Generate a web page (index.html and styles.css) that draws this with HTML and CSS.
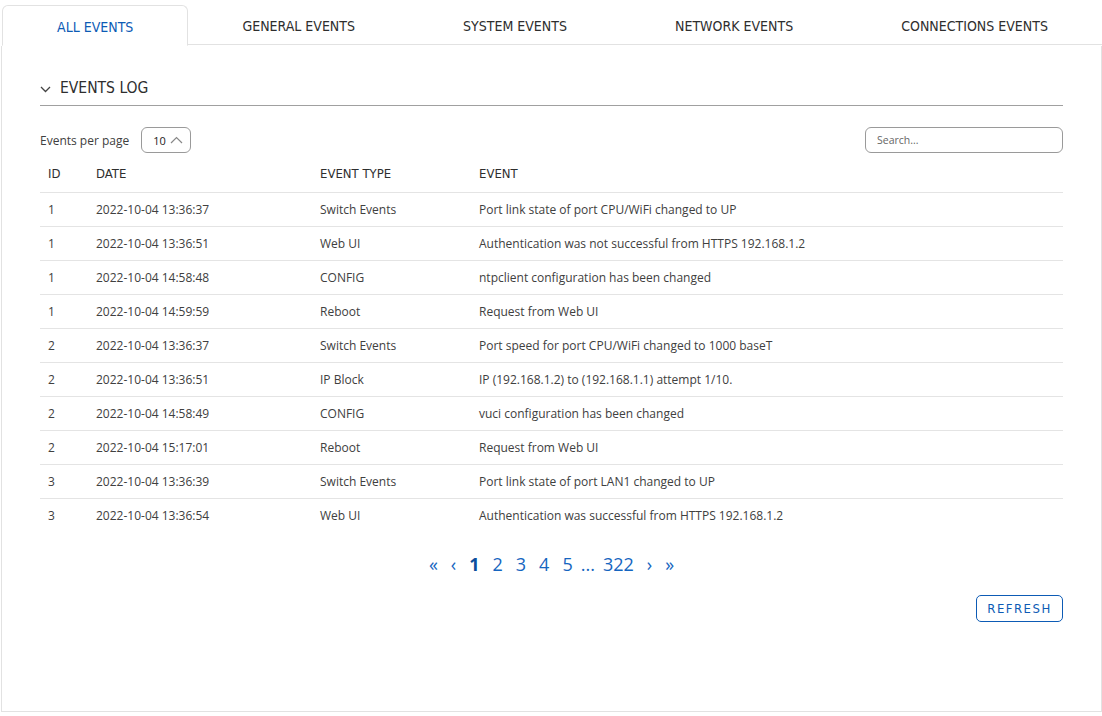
FILE: index.html
```html
<!DOCTYPE html>
<html lang="en">
<head>
  <meta charset="UTF-8" />
  <meta name="viewport" content="width=device-width, initial-scale=1.0"/>
  <title>Events Log</title>
  <link rel="stylesheet" href="styles.css">
</head>
<body>
  <div class="page">
    <ul class="tabs">
      <li class="tab active">All events</li>
      <li class="tab">General events</li>
      <li class="tab">System events</li>
      <li class="tab">Network events</li>
      <li class="tab">Connections events</li>
    </ul>
    <div class="panel">
      <div class="section-title">
        <svg class="chevron" width="11" height="7" viewBox="0 0 11 7"><path d="M1 1l4.5 4.5L10 1" fill="none" stroke="#444" stroke-width="1.3"/></svg>
        <span>Events log</span>
      </div>

      <div class="toolbar">
        <div class="per-page">
          <span>Events per page</span>
          <div class="select">10
            <svg width="13" height="8" viewBox="0 0 13 8"><path d="M1 7l5.5-5.5L12 7" fill="none" stroke="#888" stroke-width="1.2"/></svg>
          </div>
        </div>
        <input class="search" type="text" placeholder="Search...">
      </div>

      <table class="events">
        <thead>
          <tr><th class="c-id">ID</th><th class="c-date">Date</th><th class="c-type">Event type</th><th>Event</th></tr>
        </thead>
        <tbody>
          <tr><td>1</td><td>2022-10-04 13:36:37</td><td>Switch Events</td><td>Port link state of port CPU/WiFi changed to UP</td></tr>
          <tr><td>1</td><td>2022-10-04 13:36:51</td><td>Web UI</td><td>Authentication was not successful from HTTPS 192.168.1.2</td></tr>
          <tr><td>1</td><td>2022-10-04 14:58:48</td><td>CONFIG</td><td>ntpclient configuration has been changed</td></tr>
          <tr><td>1</td><td>2022-10-04 14:59:59</td><td>Reboot</td><td>Request from Web UI</td></tr>
          <tr><td>2</td><td>2022-10-04 13:36:37</td><td>Switch Events</td><td>Port speed for port CPU/WiFi changed to 1000 baseT</td></tr>
          <tr><td>2</td><td>2022-10-04 13:36:51</td><td>IP Block</td><td>IP (192.168.1.2) to (192.168.1.1) attempt 1/10.</td></tr>
          <tr><td>2</td><td>2022-10-04 14:58:49</td><td>CONFIG</td><td>vuci configuration has been changed</td></tr>
          <tr><td>2</td><td>2022-10-04 15:17:01</td><td>Reboot</td><td>Request from Web UI</td></tr>
          <tr><td>3</td><td>2022-10-04 13:36:39</td><td>Switch Events</td><td>Port link state of port LAN1 changed to UP</td></tr>
          <tr><td>3</td><td>2022-10-04 13:36:54</td><td>Web UI</td><td>Authentication was successful from HTTPS 192.168.1.2</td></tr>
        </tbody>
      </table>

      <div class="pagination">
        <a>&laquo;</a>
        <a>&lsaquo;</a>
        <a class="current">1</a>
        <a>2</a>
        <a>3</a>
        <a>4</a>
        <a>5</a>
        <span class="dots">...</span>
        <a>322</a>
        <a>&rsaquo;</a>
        <a>&raquo;</a>
      </div>

      <div class="actions">
        <button class="refresh-btn">Refresh</button>
      </div>
    </div>
  </div>
</body>
</html>
```

FILE: styles.css
```css
body {
  margin: 0;
  font-family: 'Open Sans', sans-serif;
  font-size: 12px;
  color: #404040;
  background: #fff;
}
.page {
  padding: 5px 0 4px 1px;
}
.tabs {
  display: flex;
  list-style: none;
  margin: 0;
  padding: 0;
}
.tab {
  flex: 1 1 auto;
  height: 39px;
  line-height: 42px;
  text-align: center;
  font-family: 'Liberation Sans Narrow', 'DejaVu Sans Condensed', sans-serif;
  font-stretch: condensed;
  font-size: 14px;
  text-transform: uppercase;
  color: #2e2e2e;
  border-bottom: 1px solid #e2e2e2;
  padding: 0 10px;
}
.tab.active {
  color: #0d5bb5;
  border: 1px solid #e2e2e2;
  border-bottom-color: #fff;
  border-radius: 6px 6px 0 0;
  margin-left: 1px;
}
.panel {
  border: 1px solid #e2e2e2;
  border-top: none;
  height: 625px;
  padding: 31px 38px 9px 38px;
}
.section-title {
  display: flex;
  align-items: center;
  gap: 9px;
  border-bottom: 1px solid #a0a0a0;
  padding-bottom: 6px;
  font-family: 'Liberation Sans Narrow', 'DejaVu Sans Condensed', sans-serif;
  font-stretch: condensed;
  font-size: 15.5px;
  line-height: 22px;
  text-transform: uppercase;
  color: #2e2e2e;
}
.chevron { margin-top: 3px; }
.toolbar {
  display: flex;
  justify-content: space-between;
  align-items: center;
  margin-top: 21px;
}
.per-page {
  display: flex;
  align-items: center;
  gap: 12px;
}
.select {
  display: flex;
  align-items: center;
  gap: 4px;
  height: 24px;
  padding: 0 7px 0 11px;
  border: 1px solid #9a9a9a;
  border-radius: 6px;
  font-size: 11px;
  color: #222;
}
.search {
  width: 174px;
  height: 24px;
  margin: 0;
  padding: 0 11px;
  border: 1px solid #9a9a9a;
  border-radius: 6px;
  font-family: 'Open Sans', sans-serif;
  font-size: 10.5px;
  box-sizing: content-box;
}
.search::placeholder { color: #666; }
.events {
  width: 100%;
  border-collapse: collapse;
}
.events th {
  text-align: left;
  font-family: 'Liberation Sans Narrow', 'DejaVu Sans Condensed', sans-serif;
  font-stretch: condensed;
  font-weight: normal;
  font-size: 13px;
  text-transform: uppercase;
  color: #2e2e2e;
  line-height: 20px;
  padding: 11px 8px 8px;
}
.events .c-id { width: 32px; }
.events .c-date { width: 208px; }
.events .c-type { width: 143px; }
.events td {
  border-top: 1px solid #e4e4e4;
  height: 33px;
  padding: 0 8px;
}
.pagination {
  display: flex;
  justify-content: center;
  align-items: center;
  gap: 13px;
  margin-top: 20px;
  font-size: 18px;
  line-height: 24px;
  color: #1565c0;
}
.pagination .current {
  font-weight: bold;
  color: #0b4f9c;
}
.pagination .dots { margin: 0 -5px; }
.actions {
  display: flex;
  justify-content: flex-end;
  margin-top: 19px;
}
.refresh-btn {
  width: 87px;
  height: 27px;
  background: #fff;
  border: 1px solid #0d5bb5;
  border-radius: 5px;
  color: #0d5bb5;
  font-family: 'Liberation Sans Narrow', 'DejaVu Sans Condensed', sans-serif;
  font-stretch: condensed;
  font-size: 13px;
  letter-spacing: 1.5px;
  text-transform: uppercase;
  cursor: pointer;
}
```
